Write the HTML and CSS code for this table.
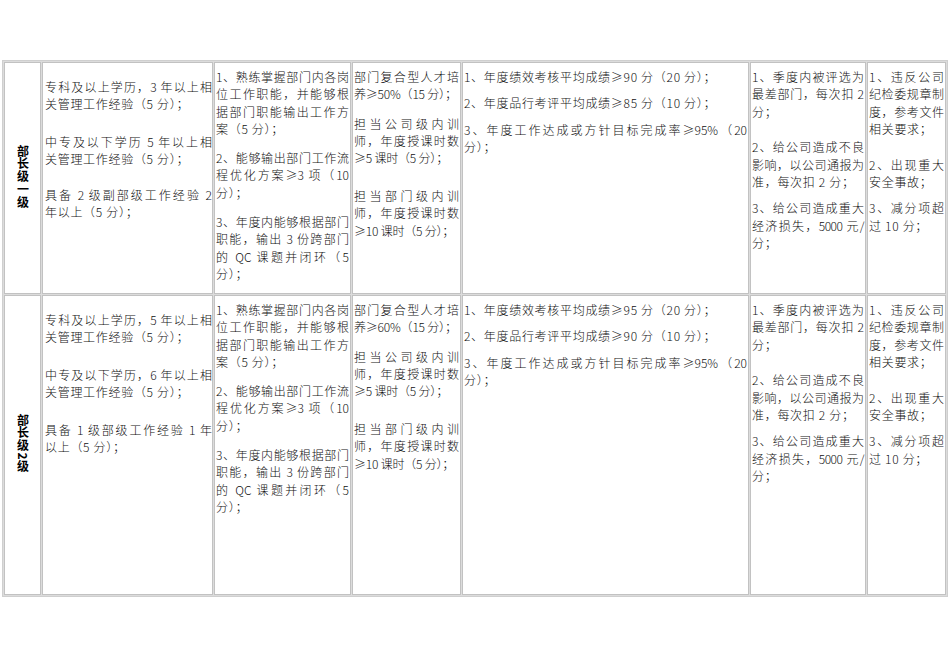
FILE: index.html
```html
<!DOCTYPE html>
<html lang="zh-CN">
<head>
<meta charset="utf-8">
<title>部长级任职标准</title>
<link rel="stylesheet" href="styles.css">
</head>
<body>
<table class="grid">
  <tr class="row-1">
    <td class="c-level"><div class="level">部长级一级</div></td>
    <td class="c-edu">
      <p class="lead"><span class="ln fill">专科及以上学历，3 年以上相</span><span class="ln">关管理工作经验（5 分）；</span></p>
      <p class="gap-xl"><span class="ln fill">中专及以下学历 5 年以上相</span><span class="ln">关管理工作经验（5 分）；</span></p>
      <p class="gap-l"><span class="ln fill">具备 2 级副部级工作经验 2</span><span class="ln">年以上（5 分）；</span></p>
    </td>
    <td class="c-skill">
      <p><span class="ln fill">1、熟练掌握部门内各岗</span><span class="ln fill">位工作职能，并能够根</span><span class="ln fill">据部门职能输出工作方</span><span class="ln">案（5 分）；</span></p>
      <p class="gap-m"><span class="ln fill">2、能够输出部门工作流</span><span class="ln fill">程优化方案≥3 项（10</span><span class="ln">分）；</span></p>
      <p class="gap-m"><span class="ln fill">3、年度内能够根据部门</span><span class="ln fill">职能，输出 3 份跨部门</span><span class="ln fill">的 QC 课题并闭环（5</span><span class="ln">分）；</span></p>
    </td>
    <td class="c-train">
      <p><span class="ln fill">部门复合型人才培</span><span class="ln">养≥50%（15 分）；</span></p>
      <p class="gap-m"><span class="ln fill">担当公司级内训</span><span class="ln fill">师，年度授课时数</span><span class="ln">≥5 课时（5 分）；</span></p>
      <p class="gap-xl"><span class="ln fill">担当部门级内训</span><span class="ln fill">师，年度授课时数</span><span class="ln">≥10 课时（5 分）；</span></p>
    </td>
    <td class="c-perf">
      <p><span class="ln">1、年度绩效考核平均成绩≥90 分（20 分）；</span></p>
      <p class="gap-s"><span class="ln">2、年度品行考评平均成绩≥85 分（10 分）；</span></p>
      <p class="gap-s"><span class="ln fill">3、年度工作达成或方针目标完成率≥95%（20</span><span class="ln">分）；</span></p>
    </td>
    <td class="c-deduct">
      <p><span class="ln fill">1、季度内被评选为</span><span class="ln fill">最差部门，每次扣 2</span><span class="ln">分；</span></p>
      <p class="gap-l"><span class="ln fill">2、给公司造成不良</span><span class="ln fill">影响，以公司通报为</span><span class="ln">准，每次扣 2 分；</span></p>
      <p class="gap-s"><span class="ln fill">3、给公司造成重大</span><span class="ln fill tight">经济损失，5000 元/</span><span class="ln">分；</span></p>
    </td>
    <td class="c-veto">
      <p><span class="ln fill">1、违反公司</span><span class="ln fill">纪检委规章制</span><span class="ln fill">度，参考文件</span><span class="ln">相关要求；</span></p>
      <p class="gap-l"><span class="ln fill">2、出现重大</span><span class="ln">安全事故；</span></p>
      <p class="gap-s"><span class="ln fill">3、减分项超</span><span class="ln">过 10 分；</span></p>
    </td>
  </tr>
  <tr class="row-2">
    <td class="c-level"><div class="level">部长级2级</div></td>
    <td class="c-edu">
      <p class="lead"><span class="ln fill">专科及以上学历，5 年以上相</span><span class="ln">关管理工作经验（5 分）；</span></p>
      <p class="gap-xl"><span class="ln fill">中专及以下学历，6 年以上相</span><span class="ln">关管理工作经验（5 分）；</span></p>
      <p class="gap-xl"><span class="ln fill">具备 1 级部级工作经验 1 年</span><span class="ln">以上（5 分）；</span></p>
    </td>
    <td class="c-skill">
      <p><span class="ln fill">1、熟练掌握部门内各岗</span><span class="ln fill">位工作职能，并能够根</span><span class="ln fill">据部门职能输出工作方</span><span class="ln">案（5 分）；</span></p>
      <p class="gap-m"><span class="ln fill">2、能够输出部门工作流</span><span class="ln fill">程优化方案≥3 项（10</span><span class="ln">分）；</span></p>
      <p class="gap-m"><span class="ln fill">3、年度内能够根据部门</span><span class="ln fill">职能，输出 3 份跨部门</span><span class="ln fill">的 QC 课题并闭环（5</span><span class="ln">分）；</span></p>
    </td>
    <td class="c-train">
      <p><span class="ln fill">部门复合型人才培</span><span class="ln">养≥60%（15 分）；</span></p>
      <p class="gap-m"><span class="ln fill">担当公司级内训</span><span class="ln fill">师，年度授课时数</span><span class="ln">≥5 课时（5 分）；</span></p>
      <p class="gap-xl"><span class="ln fill">担当部门级内训</span><span class="ln fill">师，年度授课时数</span><span class="ln">≥10 课时（5 分）；</span></p>
    </td>
    <td class="c-perf">
      <p><span class="ln">1、年度绩效考核平均成绩≥95 分（20 分）；</span></p>
      <p class="gap-s"><span class="ln">2、年度品行考评平均成绩≥90 分（10 分）；</span></p>
      <p class="gap-s"><span class="ln fill">3、年度工作达成或方针目标完成率≥95%（20</span><span class="ln">分）；</span></p>
    </td>
    <td class="c-deduct">
      <p><span class="ln fill">1、季度内被评选为</span><span class="ln fill">最差部门，每次扣 2</span><span class="ln">分；</span></p>
      <p class="gap-l"><span class="ln fill">2、给公司造成不良</span><span class="ln fill">影响，以公司通报为</span><span class="ln">准，每次扣 2 分；</span></p>
      <p class="gap-s"><span class="ln fill">3、给公司造成重大</span><span class="ln fill tight">经济损失，5000 元/</span><span class="ln">分；</span></p>
    </td>
    <td class="c-veto">
      <p><span class="ln fill">1、违反公司</span><span class="ln fill">纪检委规章制</span><span class="ln fill">度，参考文件</span><span class="ln">相关要求；</span></p>
      <p class="gap-l"><span class="ln fill">2、出现重大</span><span class="ln">安全事故；</span></p>
      <p class="gap-s"><span class="ln fill">3、减分项超</span><span class="ln">过 10 分；</span></p>
    </td>
  </tr>
</table>
</body>
</html>
```

FILE: styles.css
```css
* {
  box-sizing: border-box;
}

html,
body {
  margin: 0;
  background: #ffffff;
}

body {
  padding: 60px 0 0 2px;
  font-family: "Noto Sans CJK SC", "Noto Sans", sans-serif;
  font-size: 12px;
  font-weight: 300;
  color: #111111;
}

.grid {
  width: 946px;
  table-layout: fixed;
  border: 1px solid #cfcfcf;
  border-spacing: 1px;
  background: #dcdcdc;
}

.grid td {
  background: #ffffff;
  border: 1px solid #c2c2c2;
  vertical-align: top;
  padding: 5px 1px 0 1px;
}

.row-1 td {
  height: 232px;
}

.row-2 td {
  height: 300px;
}

.c-level {
  width: 37px;
}
.c-edu {
  width: 171px;
}
.c-skill {
  width: 137px;
}
.c-train {
  width: 109px;
}
.c-perf {
  width: 287px;
}
.c-deduct {
  width: 116px;
}
.c-veto {
  width: 79px;
}

.grid td.c-level {
  vertical-align: middle;
  text-align: center;
  padding: 0;
}

.grid td.c-edu {
  padding-left: 2px;
  padding-right: 0;
}

.level {
  display: inline-block;
  writing-mode: vertical-rl;
  text-orientation: mixed;
  font-weight: 700;
  font-size: 12px;
  line-height: 1;
  letter-spacing: 0.8px;
  color: #000;
}

p {
  margin: 0;
}

.lead {
  margin-top: 9.5px;
}

.gap-s {
  margin-top: 9px;
}
.gap-m {
  margin-top: 12px;
}
.gap-l {
  margin-top: 18.5px;
}
.gap-xl {
  margin-top: 20.5px;
}

.ln {
  display: block;
  line-height: 17.3px;
  white-space: nowrap;
  letter-spacing: 0.7px;
}

.ln.fill {
  white-space: normal;
  letter-spacing: 0;
  text-align: justify;
  text-align-last: justify;
}

.ln.tight {
  letter-spacing: -0.5px;
}

.c-train .ln {
  letter-spacing: -0.2px;
}

.c-train .ln.fill {
  letter-spacing: 0;
}
```
